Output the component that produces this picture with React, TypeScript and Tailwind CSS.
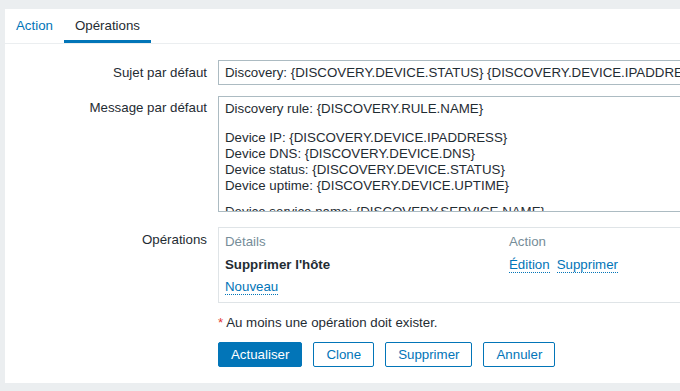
import React from "react";

const textColor = "text-[#1f2c33]";

function Link({ children }: { children: React.ReactNode }) {
  return (
    <span className="inline-block leading-[15px] border-b border-dotted border-[#0275b8] text-[#0275b8]">
      {children}
    </span>
  );
}

function Button({ label, primary = false }: { label: string; primary?: boolean }) {
  return (
    <button
      className={`h-[25px] px-3 rounded-[2px] border border-[#0275b8] text-[13.3px] leading-none ${
        primary ? "bg-[#0275b8] text-white" : "bg-white text-[#0275b8]"
      }`}
    >
      {label}
    </button>
  );
}

export default function App() {
  return (
    <div
      className={`w-[680px] h-[391px] overflow-hidden bg-[#ebeef0] pt-[9px] pl-[5px] text-[13.3px] leading-[16px] ${textColor}`}
      style={{ fontFamily: '"Liberation Sans", Arial, sans-serif' }}
    >
      <div className="w-[720px] bg-white pb-[16px]">
        {/* Tabs */}
        <div className="flex h-[35px] border-b border-[#ebeef0]">
          <div className="h-[34px] px-[11px] pt-[3px] flex items-center border-b-[3px] border-transparent text-[#0275b8]">
            Action
          </div>
          <div className="h-[34px] px-[11px] pt-[3px] flex items-center border-b-[3px] border-[#0275b8]">
            Opérations
          </div>
        </div>

        <div className="pt-[16px] flex flex-col">
          {/* Sujet */}
          <div className="flex items-center">
            <div className="w-[202px] text-right">Sujet par défaut</div>
            <div className="ml-[11px] w-[480px] h-[25px] border border-[#acbbc2] px-[6px] flex items-center whitespace-nowrap overflow-hidden">
              Discovery: {"{DISCOVERY.DEVICE.STATUS}"} {"{DISCOVERY.DEVICE.IPADDRESS}"}
            </div>
          </div>

          {/* Message */}
          <div className="flex items-start mt-[11px]">
            <div className="w-[202px] text-right pt-[4px]">Message par défaut</div>
            <div className="ml-[11px] w-[480px] h-[116px] border border-[#acbbc2] px-[6px] pt-[4px] overflow-hidden whitespace-nowrap">
              <div>Discovery rule: {"{DISCOVERY.RULE.NAME}"}</div>
              <div className="h-[13px]" />
              <div>Device IP: {"{DISCOVERY.DEVICE.IPADDRESS}"}</div>
              <div>Device DNS: {"{DISCOVERY.DEVICE.DNS}"}</div>
              <div>Device status: {"{DISCOVERY.DEVICE.STATUS}"}</div>
              <div>Device uptime: {"{DISCOVERY.DEVICE.UPTIME}"}</div>
              <div className="h-[10px]" />
              <div>Device service name: {"{DISCOVERY.SERVICE.NAME}"}</div>
            </div>
          </div>

          {/* Opérations */}
          <div className="flex items-start mt-[15px]">
            <div className="w-[202px] text-right pt-[5px]">Opérations</div>
            <div className="ml-[11px] w-[480px] h-[76px] border border-[#dfe4e7] pl-[6px] pt-[2px]">
              <div className="flex h-[23px] items-center text-[#768d99]">
                <div className="w-[284px]">Détails</div>
                <div>Action</div>
              </div>
              <div className="flex h-[23px] items-center">
                <div className="w-[284px] font-bold">Supprimer l'hôte</div>
                <div className="flex gap-[7px]">
                  <Link>Édition</Link>
                  <Link>Supprimer</Link>
                </div>
              </div>
              <div className="flex h-[22px] items-center">
                <Link>Nouveau</Link>
              </div>
            </div>
          </div>

          {/* Note */}
          <div className="ml-[213px] mt-[12px]">
            <span className="text-[#e33734]">*</span> Au moins une opération doit exister.
          </div>

          {/* Buttons */}
          <div className="ml-[213px] mt-[11px] flex gap-[11px]">
            <Button label="Actualiser" primary />
            <Button label="Clone" />
            <Button label="Supprimer" />
            <Button label="Annuler" />
          </div>
        </div>
      </div>
    </div>
  );
}
